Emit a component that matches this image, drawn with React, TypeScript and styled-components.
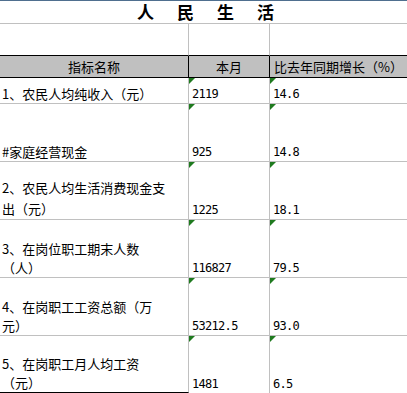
import React from "react";
import styled, { createGlobalStyle, css } from "styled-components";

const Global = createGlobalStyle`
  html, body { margin: 0; padding: 0; background: #ffffff; }
  body { width: 407px; height: 393px; overflow: hidden; }
  * { box-sizing: border-box; }
`;

const GRID = "#c0c0c0";
const INK = "#000000";

const Sheet = styled.div`
  display: grid;
  grid-template-columns: 189px 81px 137px;
  grid-template-rows: 24px 32px 22px 26px 58px 58px 58px 58px 57px;
  width: 407px;
  height: 393px;
  font-family: "Noto Sans CJK SC", "Noto Sans", sans-serif;
  font-size: 13px;
  color: #000;
`;

const TitleCell = styled.div`
  grid-column: 1 / span 3;
  border-top: 1px solid #4f6f8f;
  border-bottom: 1px solid ${GRID};
  display: flex;
  align-items: center;
  justify-content: center;
  padding-left: 4px;
`;

const TitleText = styled.span`
  font-size: 17px;
  font-weight: 700;
  letter-spacing: 23px;
  margin-right: -23px;
  line-height: 20px;
`;

const BlankCell = styled.div<{ $last?: boolean }>`
  border-bottom: 1px solid ${INK};
  border-right: ${(p) => (p.$last ? "none" : `1px solid ${GRID}`)};
`;

const HeadCell = styled.div<{ $last?: boolean }>`
  background: #c0c0c0;
  border-bottom: 1px solid ${INK};
  border-right: ${(p) => (p.$last ? "none" : `1px solid ${INK}`)};
  display: flex;
  align-items: center;
  justify-content: center;
  line-height: 19px;
  white-space: nowrap;
`;

const DataCell = styled.div<{ $col: number; $final?: boolean; $lh?: number }>`
  position: relative;
  display: flex;
  flex-direction: column;
  justify-content: flex-end;
  border-right: ${(p) => (p.$col === 2 ? "none" : `1px solid ${GRID}`)};
  border-bottom: ${(p) =>
    p.$final ? (p.$col === 0 ? `1px solid ${INK}` : "none") : `1px solid ${GRID}`};
  ${(p) =>
    p.$col === 0
      ? css`
          padding: 0 0 0 2px;
          line-height: ${p.$lh ?? 19}px;
        `
      : css`
          padding: 0 0 2px 3px;
          font-family: "DejaVu Sans Mono", "Liberation Mono", monospace;
          font-size: 12px;
          letter-spacing: -0.7px;
          line-height: 14px;
        `}
`;

const Flag = styled.span`
  position: absolute;
  top: 0;
  left: 0;
  width: 0;
  height: 0;
  border-top: 6px solid #1f7a1f;
  border-right: 6px solid transparent;
`;

const Line = styled.span`
  display: block;
  white-space: nowrap;
`;

type Row = { name: string[]; month: string; growth: string; lh?: number };

const rows: Row[] = [
  { name: ["1、农民人均纯收入（元）"], month: "2119", growth: "14.6" },
  { name: ["#家庭经营现金"], month: "925", growth: "14.8" },
  { name: ["2、农民人均生活消费现金支", "出（元）"], month: "1225", growth: "18.1", lh: 21 },
  { name: ["3、在岗位职工期末人数", "（人）"], month: "116827", growth: "79.5" },
  { name: ["4、在岗职工工资总额（万", "元）"], month: "53212.5", growth: "93.0" },
  { name: ["5、在岗职工月人均工资", "（元）"], month: "1481", growth: "6.5" },
];

export default function App() {
  return (
    <>
      <Global />
      <Sheet>
        <TitleCell>
          <TitleText>人民生活</TitleText>
        </TitleCell>
        <BlankCell />
        <BlankCell />
        <BlankCell $last />
        <HeadCell>指标名称</HeadCell>
        <HeadCell>本月</HeadCell>
        <HeadCell $last>比去年同期增长（%）</HeadCell>
        {rows.map((r, i) => {
          const final = i === rows.length - 1;
          return (
            <React.Fragment key={i}>
              <DataCell $col={0} $final={final} $lh={r.lh}>
                {r.name.map((t, j) => (
                  <Line key={j}>{t}</Line>
                ))}
              </DataCell>
              <DataCell $col={1} $final={final}>
                <Flag />
                <Line>{r.month}</Line>
              </DataCell>
              <DataCell $col={2} $final={final}>
                <Flag />
                <Line>{r.growth}</Line>
              </DataCell>
            </React.Fragment>
          );
        })}
      </Sheet>
    </>
  );
}
